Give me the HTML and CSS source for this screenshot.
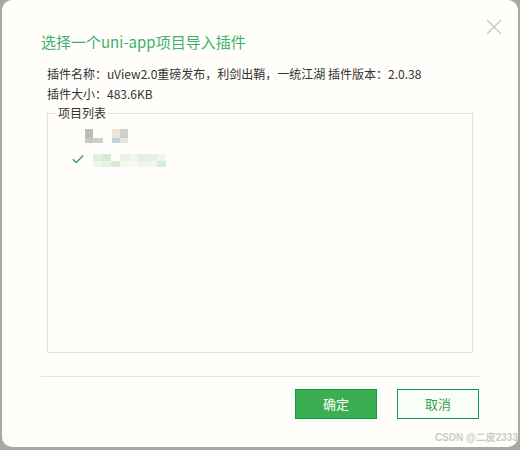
FILE: index.html
```html
<!DOCTYPE html>
<html lang="zh-CN">
<head>
<meta charset="utf-8">
<title>选择一个uni-app项目导入插件</title>
<link rel="stylesheet" href="styles.css">
</head>
<body>
<div class="dialog">
  <button class="close" aria-label="关闭">
    <svg width="16" height="16" viewBox="0 0 16 16"><path d="M1 1 L15 15 M15 1 L1 15" stroke="#c2c2c2" stroke-width="1.1" fill="none"/></svg>
  </button>
  <h1 class="title">选择一个uni-app项目导入插件</h1>
  <div class="info">
    <p>插件名称：uView2.0重磅发布，利剑出鞘，一统江湖 插件版本：2.0.38</p>
    <p>插件大小：483.6KB</p>
  </div>
  <fieldset class="projects">
    <legend>项目列表</legend>
    <div class="row row-parent">
      <span class="mosaic m-a"></span>
      <span class="mosaic m-b"></span>
    </div>
    <div class="row row-child">
      <svg class="check" width="12" height="9" viewBox="0 0 12 9"><path d="M0.8 4.2 L4.2 7.6 L11.2 0.6" stroke="#3c9d5c" stroke-width="1.4" fill="none"/></svg>
      <span class="mosaic m-c"></span>
    </div>
  </fieldset>
  <div class="divider"></div>
  <div class="actions">
    <button class="btn btn-primary">确定</button>
    <button class="btn btn-default">取消</button>
  </div>
</div>
<div class="watermark">CSDN @二皮2333</div>
</body>
</html>
```

FILE: styles.css
```css
* { box-sizing: border-box; }
html, body { margin: 0; padding: 0; }
body {
  width: 520px;
  height: 450px;
  background: #aaa89f;
  font-family: "Noto Sans CJK SC", "Noto Sans", sans-serif;
  position: relative;
}
.dialog {
  position: relative;
  margin-left: 2px;
  width: 516px;
  height: 447px;
  background: #fffefa;
  border-radius: 10px;
  padding: 0 39px;
  display: flex;
  flex-direction: column;
}
.close {
  position: absolute;
  left: 484px;
  top: 19px;
  width: 16px;
  height: 16px;
  padding: 0;
  border: 0;
  background: none;
}
.close svg { display: block; }
.title {
  margin: 32px 0 0;
  font-size: 15px;
  font-weight: normal;
  line-height: 20px;
  color: #3db06a;
}
.info {
  margin: 12px 0 0 6px;
  font-size: 12px;
  line-height: 20px;
  color: #333;
}
.info p { margin: 0; }
.projects {
  margin: 1px 0 0 6px;
  width: 426px;
  height: 248px;
  padding: 2px 0 0;
  border: 1px solid #e0e0e6;
}
.projects legend {
  margin-left: 8px;
  padding: 0 2px;
  font-size: 12px;
  line-height: 16px;
  color: #333;
}
.row {
  height: 25px;
  display: flex;
  align-items: center;
}
.row-parent { padding-left: 37px; gap: 9px; }
.row-child { padding-left: 24px; }
.check { margin-top: -2px; }
.mosaic { display: block; }
.m-a {
  width: 18px;
  height: 14px;
  background:
    linear-gradient(90deg, #bfbdb0 0 8px, transparent 8px) top / 100% 9px no-repeat,
    linear-gradient(90deg, #c6cac5 0 8px, #d0d0c8 8px) bottom / 100% 5px no-repeat;
}
.m-b {
  width: 16px;
  height: 14px;
  background:
    linear-gradient(90deg, #e9e5d9 0 8px, #ccd0cc 8px) top / 100% 9px no-repeat,
    linear-gradient(90deg, #c3d3d6 0 8px, #e3e6e1 8px) bottom / 100% 5px no-repeat;
}
.m-c {
  margin-left: 9px;
  width: 73px;
  height: 13px;
  background:
    linear-gradient(90deg, #e2eee0 0 9px, #d6e9d4 9px 18px, transparent 18px 27px, #eaf3e8 27px 37px, #f5f7ee 37px 45px, #e0f0ea 45px 55px, #e8f0e6 55px 64px, #f0f6ee 64px) top / 100% 7px no-repeat,
    linear-gradient(90deg, #eef6ec 0 9px, #e6f2e2 9px 18px, #d8ecd4 18px 27px, #f4f8ee 27px 37px, #f6f8f0 37px 45px, #eef5ee 45px 55px, #f2f6ef 55px 64px, #d6ecda 64px) bottom / 100% 6px no-repeat;
}
.divider {
  margin-top: 23px;
  height: 1px;
  background: #e4e4e8;
}
.actions {
  margin-top: 12px;
  display: flex;
  justify-content: flex-end;
  gap: 20px;
}
.btn {
  width: 82px;
  height: 30px;
  padding: 0;
  font-family: inherit;
  font-size: 13px;
  line-height: 28px;
  border: 1px solid #0e9a45;
  border-radius: 0;
}
.btn-primary { background: #3aae50; color: #fff; }
.btn-default { background: #f8fff9; color: #3a9d50; }
.watermark {
  position: absolute;
  right: 2px;
  top: 431px;
  font-family: "Liberation Sans", "Noto Sans CJK SC", sans-serif;
  font-size: 10px;
  font-weight: bold;
  line-height: 14px;
  color: #cbcbcb;
  white-space: nowrap;
}
```
